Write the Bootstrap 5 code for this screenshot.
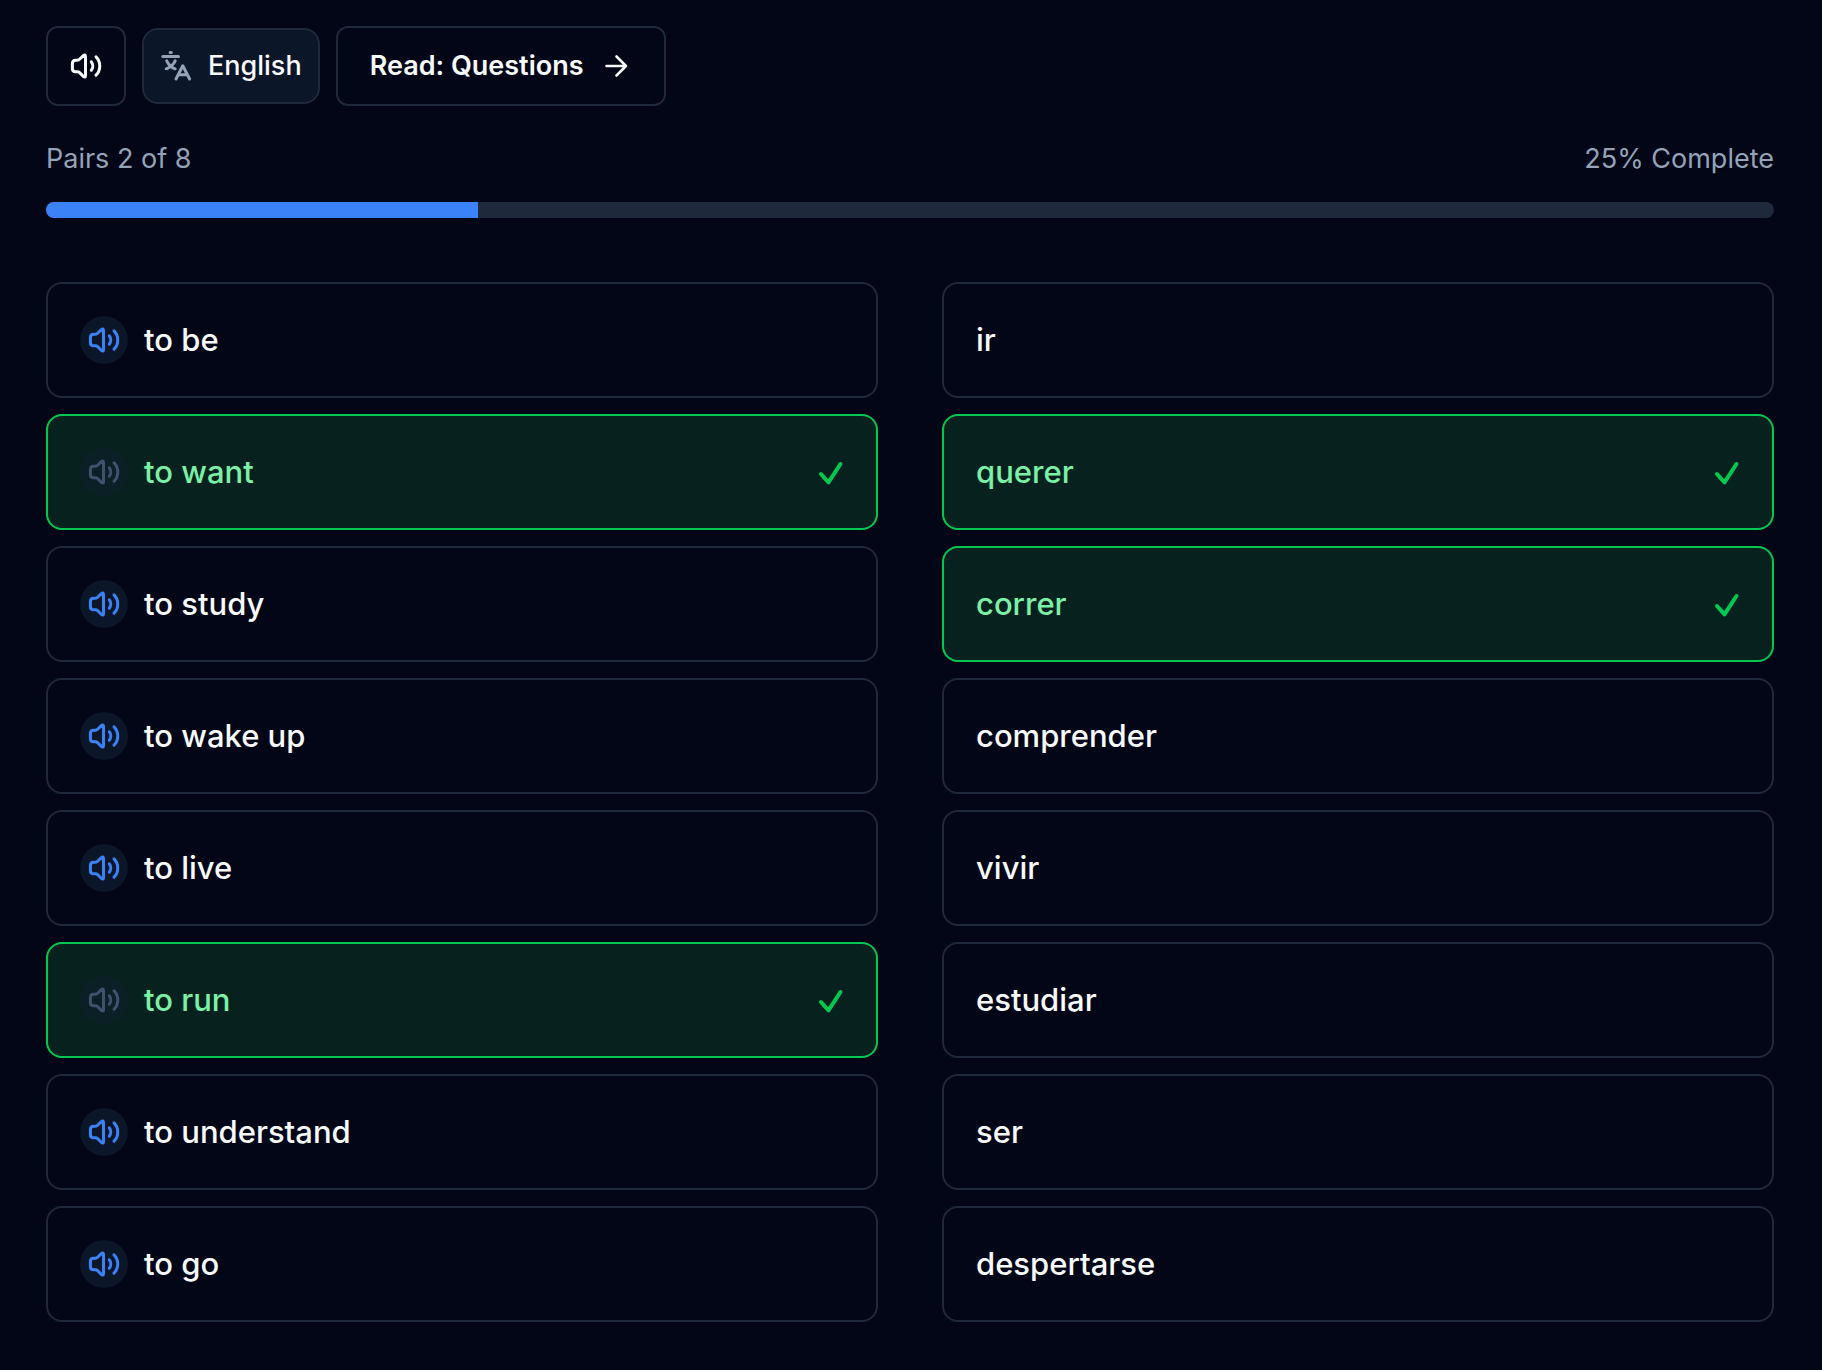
<!DOCTYPE html>
<html lang="en" data-bs-theme="dark">
<head>
<meta charset="utf-8">
<meta name="viewport" content="width=device-width, initial-scale=1">
<title>Match the pairs</title>
<link rel="stylesheet" href="https://cdn.jsdelivr.net/npm/bootstrap@5.3.0/dist/css/bootstrap.min.css">
<style>
  :root { --line: #1e293b; --ink: #f8fafc; --soft: #94a3b8; --raised: #0b1628; --accent: #3b82f6; --ok: #00c951; }
  body { background: #020617; color: var(--ink); font-family: Inter, "Liberation Sans", sans-serif; }
  .page-wrap { padding: 26px 48px 48px 46px; }
  .glyph { width: 32px; height: 32px; flex: none; display: block; fill: none; stroke: currentColor; stroke-width: 3; stroke-linecap: round; stroke-linejoin: round; }
  .tool-btn { --bs-btn-color: var(--ink); --bs-btn-border-color: var(--line); --bs-btn-border-width: 2px; --bs-btn-border-radius: 12px; --bs-btn-hover-border-color: var(--soft);
    --bs-btn-font-size: 27px; --bs-btn-line-height: 40px; --bs-btn-font-weight: 600; --bs-btn-padding-x: 32px; --bs-btn-padding-y: 18px; }
  .tool-square { --bs-btn-padding-x: 22px; --bs-btn-padding-y: 22px; }
  .tool-lang { --bs-btn-bg: var(--raised); --bs-btn-font-weight: 500; --bs-btn-border-radius: 16px; --bs-btn-padding-x: 16px; --bs-btn-padding-y: 16px; }
  .tool-lang .glyph { color: var(--soft); }
  .status-line { margin-top: 33px; margin-bottom: 23px; font-size: 27px; line-height: 40px; color: var(--soft); }
  .progress { --bs-progress-height: 16px; --bs-progress-bg: #1e293b; --bs-progress-bar-bg: var(--accent); --bs-progress-border-radius: 8px; }
  .pair-board { margin-top: 64px; --bs-gutter-x: 64px; }
  .pair-tile { border: 2px solid var(--line); border-radius: 16px; padding: 32px; }
  .hear-btn { width: 48px; height: 48px; background: var(--raised); color: var(--accent); }
  .word-btn { font-size: 31px; line-height: 48px; font-weight: 500; color: var(--ink); }
  .is-matched { background: #07211f; border-color: var(--ok); }
  .is-matched .hear-btn { background: #0a1f26; color: #41506c; }
  .is-matched .word-btn { color: #7bf1a8; }
  .is-matched .tick { color: var(--ok); stroke-width: 4; }
</style>
<script src="https://cdn.jsdelivr.net/npm/bootstrap@5.3.0/dist/js/bootstrap.bundle.min.js"></script>
</head>
<body>
<svg class="d-none" aria-hidden="true">
  <symbol id="speaker" viewBox="0 0 32 32"><path d="M15.500 6.500V25.500C15.500 27.400 14.500 27.400 13.300 26.300L9.600 22.700C8.900 22 8.300 21.800 7.300 21.800H5.600C3.400 21.800 2.400 20.800 2.400 18.600V13.400C2.400 11.200 3.400 10.200 5.600 10.200H7.300C8.300 10.200 8.900 10 9.600 9.300L13.300 5.700C14.500 4.600 15.500 4.600 15.500 6.500ZM21.300 11.800C23.200 14.200 23.200 17.800 21.300 20.200M26 6.800C31 11.600 31 20.400 26 25.200"/></symbol>
  <symbol id="translate" viewBox="0 0 32 32"><path d="M2.800 6.600H18.500M10.100 2.500H11.300M6.700 10.800C8.500 14.500 11.500 17.500 15.200 18.800M15.200 10.800C13.500 14.500 9.800 17.500 6.200 18.800M16 29L22.800 15.800L29.600 29M18.500 24.800H27.300"/></symbol>
  <symbol id="arrow" viewBox="0 0 32 32"><path stroke-width="2.6" d="M6.500 16H26M16.500 6.500L26 16L16.500 25.500"/></symbol>
  <symbol id="check" viewBox="0 0 32 32"><path d="M9 18L16.500 26.300L28.500 8"/></symbol>
</svg>
<main class="page-wrap container-fluid">
  <div class="d-flex align-items-center gap-3">
    <button type="button" class="btn tool-btn tool-square" aria-label="Sound"><svg class="glyph"><use href="#speaker"/></svg></button>
    <button type="button" class="btn tool-btn tool-lang d-flex align-items-center gap-3"><svg class="glyph"><use href="#translate"/></svg>English</button>
    <button type="button" class="btn tool-btn d-flex align-items-center gap-3">Read: Questions<svg class="glyph"><use href="#arrow"/></svg></button>
  </div>

  <div class="status-line d-flex justify-content-between"><span>Pairs 2 of 8</span><span>25% Complete</span></div>
  <div class="progress" role="progressbar" aria-label="Pairs matched" aria-valuenow="25" aria-valuemin="0" aria-valuemax="100"><div class="progress-bar" style="width: 25%"></div></div>

  <div class="row pair-board">
    <div class="col-6 d-flex flex-column gap-3">
      <div class="pair-tile d-flex gap-3"><button type="button" class="hear-btn btn border-0 rounded-circle p-2" aria-label="Listen"><svg class="glyph"><use href="#speaker"/></svg></button><button type="button" class="word-btn btn border-0 p-0 flex-grow-1 text-start">to be</button></div>
      <div class="pair-tile is-matched d-flex gap-3"><button type="button" class="hear-btn btn border-0 rounded-circle p-2" aria-label="Listen"><svg class="glyph"><use href="#speaker"/></svg></button><button type="button" class="word-btn btn border-0 p-0 flex-grow-1 d-flex align-items-center justify-content-between">to want<svg class="glyph tick"><use href="#check"/></svg></button></div>
      <div class="pair-tile d-flex gap-3"><button type="button" class="hear-btn btn border-0 rounded-circle p-2" aria-label="Listen"><svg class="glyph"><use href="#speaker"/></svg></button><button type="button" class="word-btn btn border-0 p-0 flex-grow-1 text-start">to study</button></div>
      <div class="pair-tile d-flex gap-3"><button type="button" class="hear-btn btn border-0 rounded-circle p-2" aria-label="Listen"><svg class="glyph"><use href="#speaker"/></svg></button><button type="button" class="word-btn btn border-0 p-0 flex-grow-1 text-start">to wake up</button></div>
      <div class="pair-tile d-flex gap-3"><button type="button" class="hear-btn btn border-0 rounded-circle p-2" aria-label="Listen"><svg class="glyph"><use href="#speaker"/></svg></button><button type="button" class="word-btn btn border-0 p-0 flex-grow-1 text-start">to live</button></div>
      <div class="pair-tile is-matched d-flex gap-3"><button type="button" class="hear-btn btn border-0 rounded-circle p-2" aria-label="Listen"><svg class="glyph"><use href="#speaker"/></svg></button><button type="button" class="word-btn btn border-0 p-0 flex-grow-1 d-flex align-items-center justify-content-between">to run<svg class="glyph tick"><use href="#check"/></svg></button></div>
      <div class="pair-tile d-flex gap-3"><button type="button" class="hear-btn btn border-0 rounded-circle p-2" aria-label="Listen"><svg class="glyph"><use href="#speaker"/></svg></button><button type="button" class="word-btn btn border-0 p-0 flex-grow-1 text-start">to understand</button></div>
      <div class="pair-tile d-flex gap-3"><button type="button" class="hear-btn btn border-0 rounded-circle p-2" aria-label="Listen"><svg class="glyph"><use href="#speaker"/></svg></button><button type="button" class="word-btn btn border-0 p-0 flex-grow-1 text-start">to go</button></div>
    </div>
    <div class="col-6 d-flex flex-column gap-3">
      <div class="pair-tile d-flex"><button type="button" class="word-btn btn border-0 p-0 flex-grow-1 text-start">ir</button></div>
      <div class="pair-tile is-matched d-flex"><button type="button" class="word-btn btn border-0 p-0 flex-grow-1 d-flex align-items-center justify-content-between">querer<svg class="glyph tick"><use href="#check"/></svg></button></div>
      <div class="pair-tile is-matched d-flex"><button type="button" class="word-btn btn border-0 p-0 flex-grow-1 d-flex align-items-center justify-content-between">correr<svg class="glyph tick"><use href="#check"/></svg></button></div>
      <div class="pair-tile d-flex"><button type="button" class="word-btn btn border-0 p-0 flex-grow-1 text-start">comprender</button></div>
      <div class="pair-tile d-flex"><button type="button" class="word-btn btn border-0 p-0 flex-grow-1 text-start">vivir</button></div>
      <div class="pair-tile d-flex"><button type="button" class="word-btn btn border-0 p-0 flex-grow-1 text-start">estudiar</button></div>
      <div class="pair-tile d-flex"><button type="button" class="word-btn btn border-0 p-0 flex-grow-1 text-start">ser</button></div>
      <div class="pair-tile d-flex"><button type="button" class="word-btn btn border-0 p-0 flex-grow-1 text-start">despertarse</button></div>
    </div>
  </div>
</main>
</body>
</html>
